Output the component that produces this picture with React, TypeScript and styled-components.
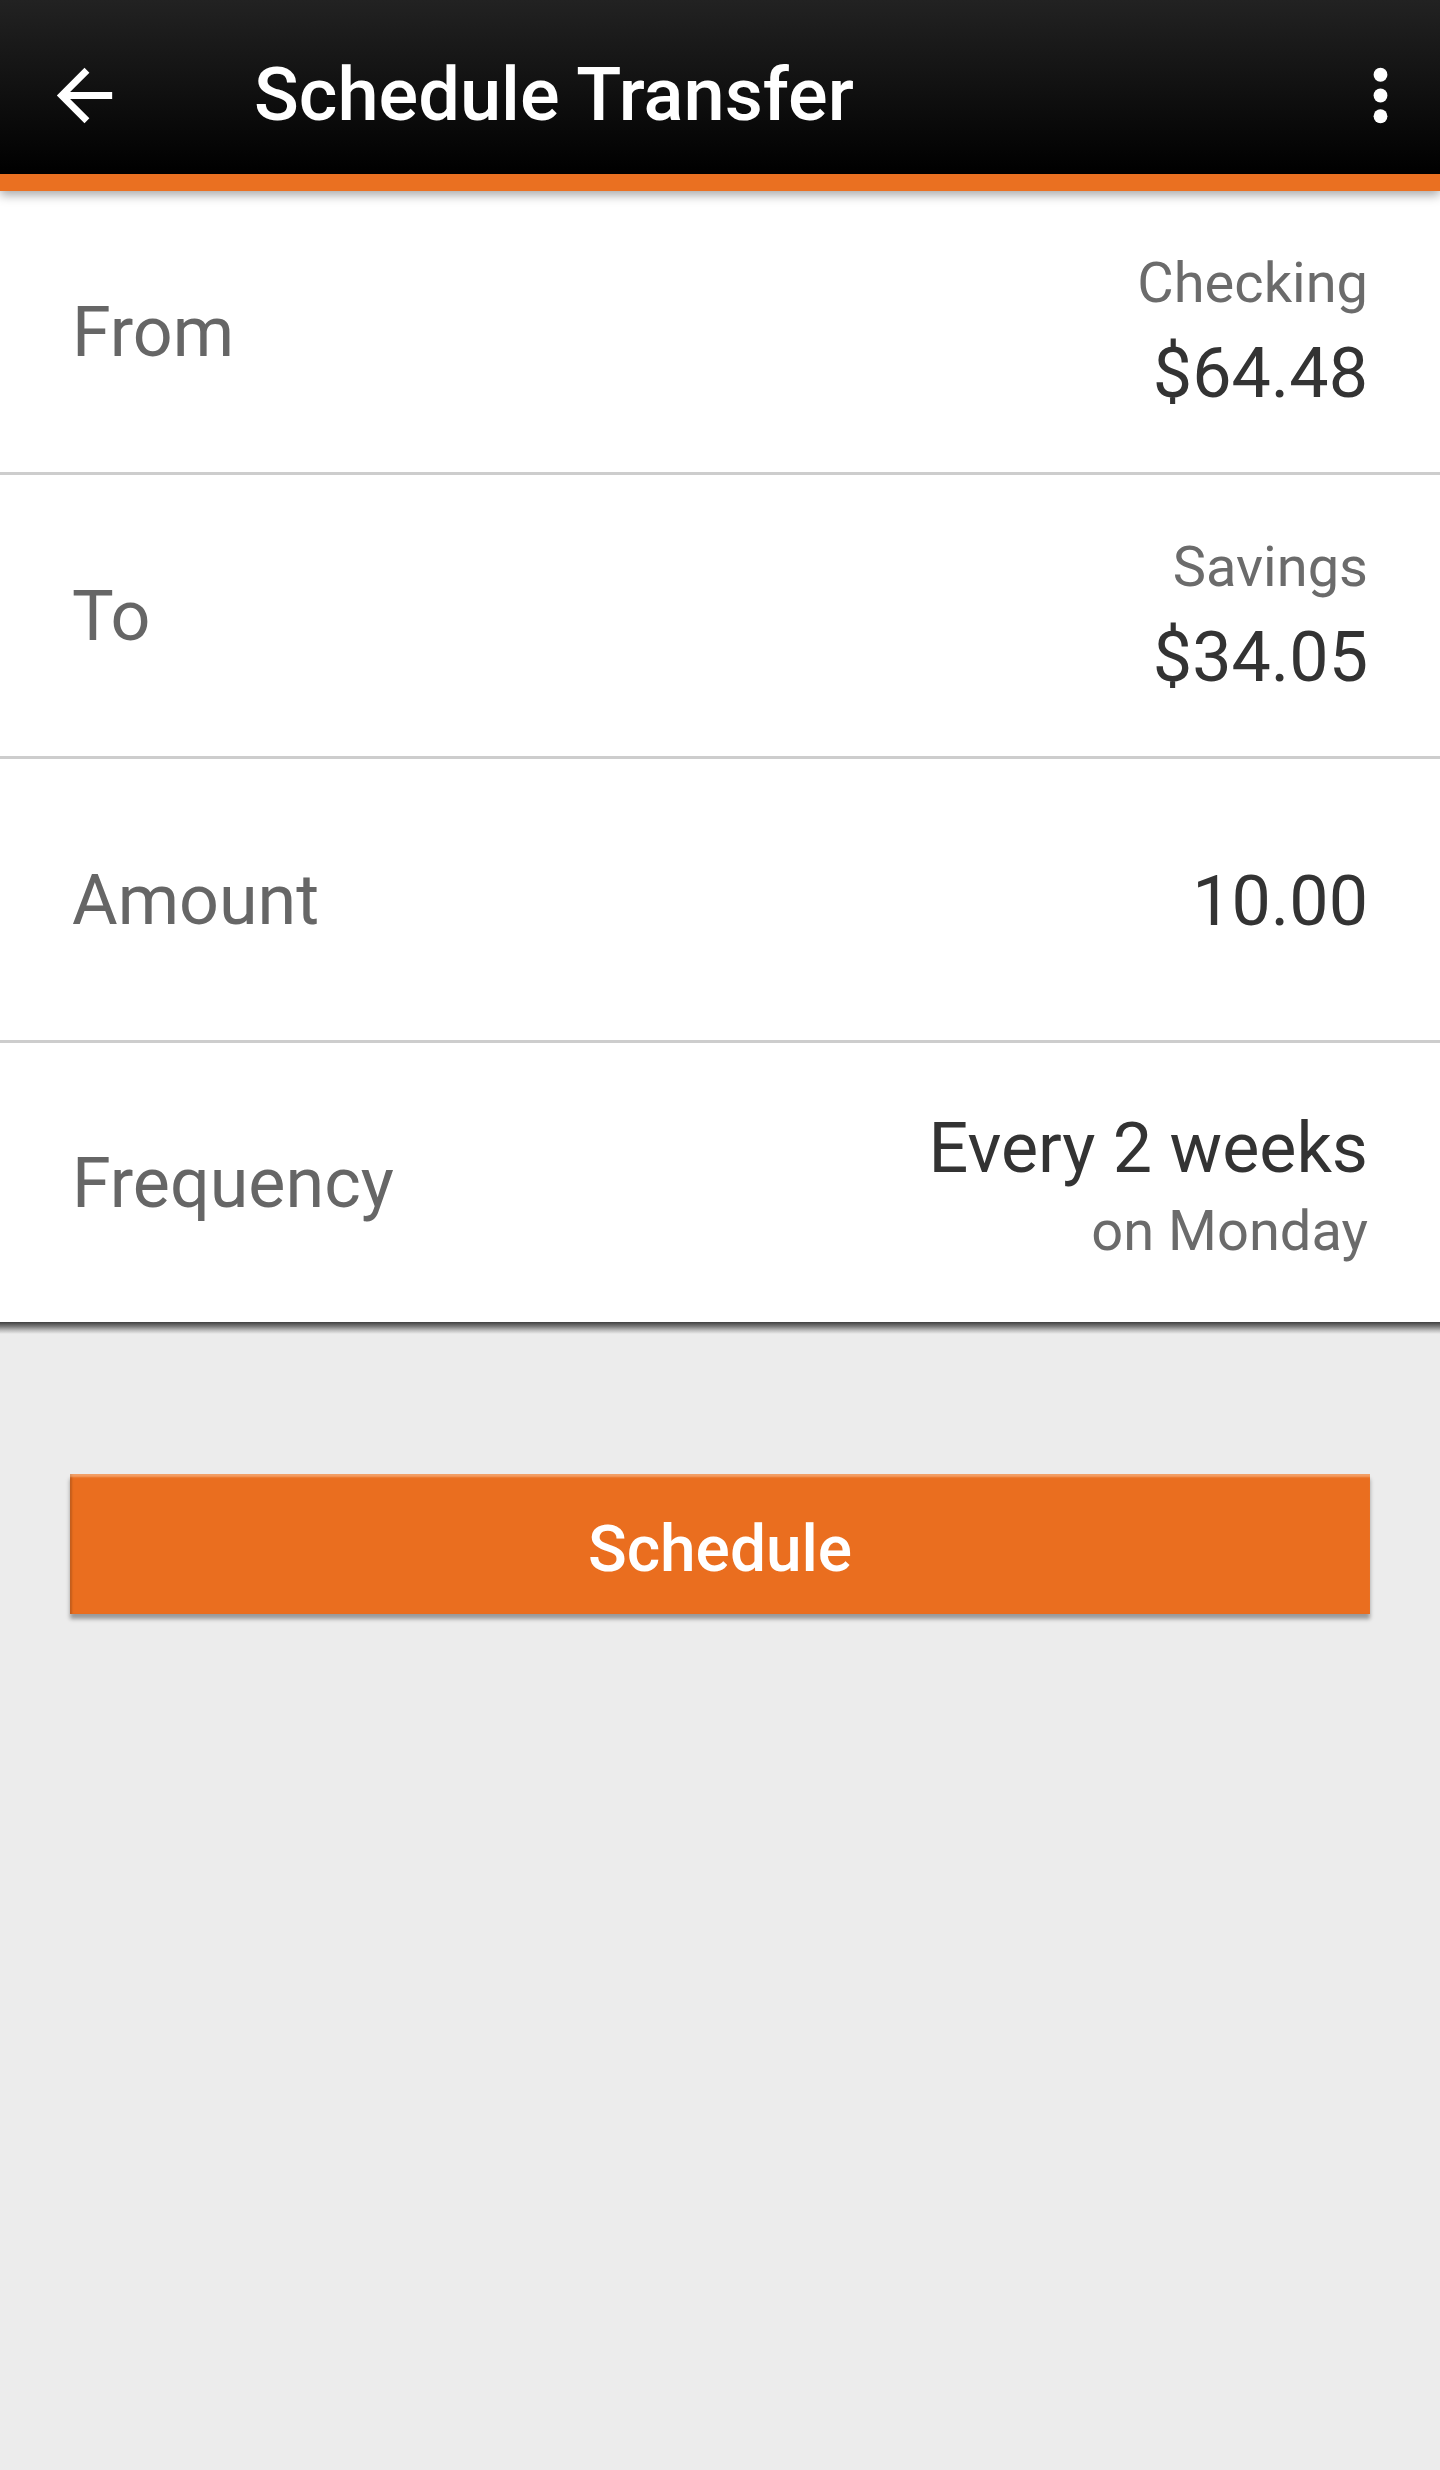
import { createGlobalStyle } from "styled-components";
import styled from "styled-components";

const GlobalStyle = createGlobalStyle`
  html, body {
    margin: 0;
    padding: 0;
    background: #ececec;
  }
  body {
    font-family: Roboto, "Liberation Sans", Arial, sans-serif;
  }
`;

const Page = styled.div`
  min-height: 100vh;
  background: #ececec;
  display: flex;
  flex-direction: column;
`;

const Header = styled.header`
  position: relative;
  z-index: 2;
  box-sizing: content-box;
  height: 158px;
  padding-top: 16px;
  display: flex;
  align-items: center;
  background: linear-gradient(to bottom, #222222 0%, #111111 50%, #000000 100%);
  border-bottom: 17px solid #ea7021;
  box-shadow: 0 4px 10px rgba(0, 0, 0, 0.35);
`;

const IconButton = styled.button<{ $left?: number; $right?: number }>`
  width: 83px;
  height: 83px;
  padding: 0;
  border: 0;
  background: transparent;
  display: flex;
  align-items: center;
  justify-content: center;
  color: #fff;
  margin-left: ${(p) => p.$left ?? 0}px;
  margin-right: ${(p) => p.$right ?? 0}px;
  svg {
    width: 83px;
    height: 83px;
    fill: currentColor;
  }
`;

const Title = styled.h1`
  flex: 1;
  margin: 0 0 0 128px;
  color: #fff;
  font-size: 74px;
  font-weight: 500;
  line-height: 1;
`;

const List = styled.section`
  background: #fff;
  display: flex;
  flex-direction: column;
`;

const Row = styled.div<{ $last?: boolean }>`
  height: ${(p) => (p.$last ? 279 : 281)}px;
  padding: 0 72px;
  display: flex;
  align-items: center;
  justify-content: space-between;
  border-bottom: ${(p) => (p.$last ? "none" : "3px solid #cdcdcd")};
`;

const Label = styled.span`
  color: #666666;
  font-size: 70px;
  line-height: 1;
`;

const Values = styled.div<{ $shift?: number }>`
  display: flex;
  flex-direction: column;
  align-items: flex-end;
  text-align: right;
  padding-top: ${(p) => p.$shift ?? 0}px;
`;

const Sub = styled.span<{ $lh: number }>`
  color: #6b6b6b;
  font-size: 56px;
  line-height: ${(p) => p.$lh}px;
`;

const Main = styled.span<{ $lh: number }>`
  color: #333333;
  font-size: 70px;
  line-height: ${(p) => p.$lh}px;
`;

const ListShadow = styled.div`
  height: 12px;
  background: linear-gradient(
    to bottom,
    #3f3f3f 0%,
    #777777 35%,
    #bdbdbd 70%,
    #ececec 100%
  );
`;

const Actions = styled.div`
  padding: 140px 70px 0 70px;
`;

const PrimaryButton = styled.button`
  width: 100%;
  height: 140px;
  border: 0;
  border-radius: 0;
  background: #ea6e1f;
  color: #fff;
  font-family: Roboto, "Liberation Sans", Arial, sans-serif;
  font-size: 64px;
  font-weight: 500;
  padding: 10px 0 0 0;
  box-shadow: inset 0 4px 2px -1px rgba(255, 220, 190, 0.45),
    inset 3px 0 2px -1px rgba(120, 60, 20, 0.35),
    0 5px 4px rgba(0, 0, 0, 0.35);
`;

const BackIcon = () => (
  <svg viewBox="0 0 24 24">
    <path d="M20 11H7.83l5.59-5.59L12 4l-8 8 8 8 1.41-1.41L7.83 13H20v-2z" />
  </svg>
);

const MoreIcon = () => (
  <svg viewBox="0 0 24 24">
    <circle cx="12" cy="6" r="2" />
    <circle cx="12" cy="12" r="2" />
    <circle cx="12" cy="18" r="2" />
  </svg>
);

const App = () => {
  return (
    <Page>
      <GlobalStyle />
      <Header>
        <IconButton $left={43} aria-label="Back">
          <BackIcon />
        </IconButton>
        <Title>Schedule Transfer</Title>
        <IconButton $right={18} aria-label="More">
          <MoreIcon />
        </IconButton>
      </Header>
      <List>
        <Row>
          <Label>From</Label>
          <Values $shift={2}>
            <Sub $lh={80}>Checking</Sub>
            <Main $lh={100}>$64.48</Main>
          </Values>
        </Row>
        <Row>
          <Label>To</Label>
          <Values $shift={2}>
            <Sub $lh={80}>Savings</Sub>
            <Main $lh={100}>$34.05</Main>
          </Values>
        </Row>
        <Row>
          <Label>Amount</Label>
          <Values $shift={2}>
            <Main $lh={80}>10.00</Main>
          </Values>
        </Row>
        <Row $last>
          <Label>Frequency</Label>
          <Values $shift={6}>
            <Main $lh={90}>Every 2 weeks</Main>
            <Sub $lh={76}>on Monday</Sub>
          </Values>
        </Row>
      </List>
      <ListShadow />
      <Actions>
        <PrimaryButton>Schedule</PrimaryButton>
      </Actions>
    </Page>
  );
};

export default App;
